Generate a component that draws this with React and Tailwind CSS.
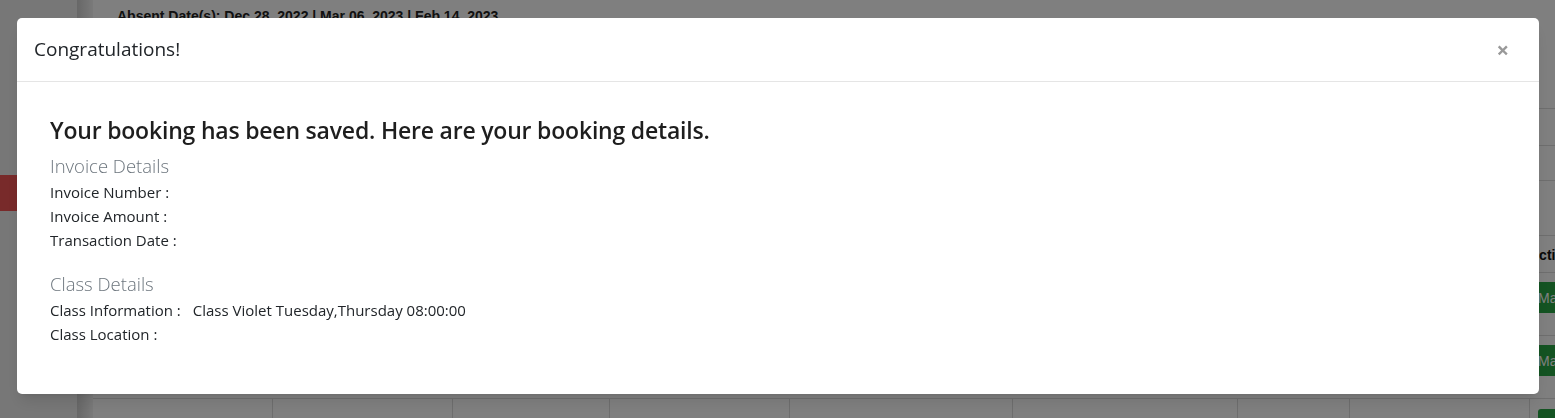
import React from "react";

const cols = [180, 180, 157, 180, 223, 225, 112, 180, 40];

const BookingModal = () => {
  return (
    <div className="fixed inset-0 z-20 bg-black/50">
      <div className="mt-[18px] ml-[17px] w-[1522px] h-[376px] bg-white rounded-[5px] shadow-lg font-['Open_Sans',sans-serif] text-[#212529]">
        <div className="h-[64px] border-b border-[#e5e5e5] flex items-center justify-between pl-[17px] pr-[30px]">
          <h4 className="text-[19px] leading-none pb-[2px] pt-[2px]">Congratulations!</h4>
          <button className="text-[#999] text-[22px] leading-none font-bold pb-[2px] pl-[2px]">×</button>
        </div>

        <div className="pt-[33px] pl-[33px]">
          <h3 className="text-[23px] font-semibold leading-[30px] tracking-[-0.2px] text-[#1e1e1e]">
            Your booking has been saved. Here are your booking details.
          </h3>

          <h4 className="text-[18.5px] font-light text-[#6c757d] leading-[26px] mt-[8px]">Invoice Details</h4>
          <div className="text-[15px] leading-[24px] mt-[1px]">
            <p>Invoice Number :</p>
            <p>Invoice Amount :</p>
            <p>Transaction Date :</p>
          </div>

          <h4 className="text-[18.5px] font-light text-[#6c757d] leading-[26px] mt-[19px]">Class Details</h4>
          <div className="text-[15px] leading-[24px] mt-[1px]">
            <p>
              Class Information :<span className="ml-[12px]">Class Violet Tuesday,Thursday 08:00:00</span>
            </p>
            <p>Class Location :</p>
          </div>
        </div>
      </div>
    </div>
  );
};

export default function App() {
  return (
    <div className="relative w-[1555px] h-[418px] overflow-hidden bg-white font-['Liberation_Sans',Arial,sans-serif]">
      <div className="flex h-full">
        <aside className="w-[77px] shrink-0 bg-[#eeeeee] pt-[175px]">
          <div className="h-[36px] bg-[#f05454]"></div>
        </aside>
        <div className="w-[16px] shrink-0 bg-gradient-to-r from-[#cfcfcf] to-[#f4f4f4]"></div>

        <main className="flex-1 min-w-0">
          <div className="pl-[24px] pt-[6px] h-[30px] text-[14px] font-bold text-[#222]">
            Absent Date(s): Dec 28, 2022 | Mar 06, 2023 | Feb 14, 2023
          </div>
          <div className="h-[79px] border-b border-[#dcdcdc]"></div>
          <div className="h-[37px] border-b border-[#dcdcdc]"></div>
          <div className="h-[35px] border-b border-[#dcdcdc]"></div>
          <div className="h-[55px] border-b border-[#dcdcdc]"></div>

          <div className="flex h-[37px] border-b border-[#dcdcdc] text-[14px] font-bold text-[#111]">
            <div className="flex-1"></div>
            <div className="w-[26px] pt-[9px]">Actio</div>
          </div>

          {[0, 1].map((r) => (
            <div key={r} className="flex h-[63px] border-b border-[#dcdcdc]">
              <div className="flex-1"></div>
              <div className="w-[22px] pt-[9px]">
                <div className="h-[31px] w-[22px] overflow-hidden bg-[#28a745] rounded-l-[3px] text-[14px] text-white pl-[5px] pt-[6px]">Ma</div>
              </div>
            </div>
          ))}

          <div className="flex h-[40px]">
            {cols.map((w, i) => (
              <div key={i} style={{ width: w }} className="shrink-0 border-r border-[#dcdcdc]">
                {i === cols.length - 1 && (
                  <div className="mt-[10px] ml-[8px] h-[31px] w-[60px] bg-[#28a745] rounded-[3px]"></div>
                )}
              </div>
            ))}
          </div>
        </main>
      </div>

      <BookingModal />
    </div>
  );
}
